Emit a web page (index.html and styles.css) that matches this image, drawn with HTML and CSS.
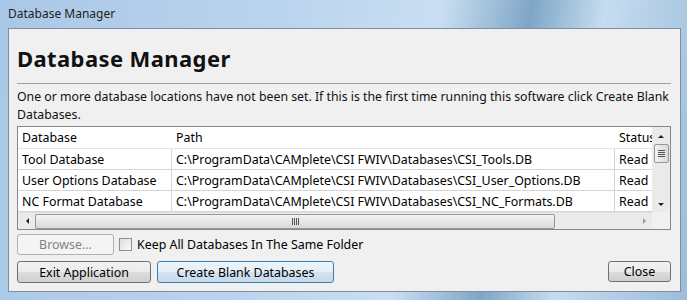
FILE: index.html
```html
<!DOCTYPE html>
<html lang="en">
<head>
    <meta charset="UTF-8">
    <title>Database Manager</title>
    <link rel="stylesheet" href="styles.css">
</head>
<body>
    <div class="window">
        <div class="title-bar">Database Manager</div>
        <div class="client">
            <h1 class="heading">Database Manager</h1>
            <p class="notice">One or more database locations have not been set. If this is the first time running this software click Create Blank Databases.</p>

            <div class="grid-box">
                <div class="grid-main">
                    <div class="grid-rows">
                        <div class="row header-row">
                            <div class="cell">Database</div>
                            <div class="cell">Path</div>
                            <div class="cell">Status</div>
                        </div>
                        <div class="row">
                            <div class="cell">Tool Database</div>
                            <div class="cell">C:\ProgramData\CAMplete\CSI FWIV\Databases\CSI_Tools.DB</div>
                            <div class="cell">Read</div>
                        </div>
                        <div class="row">
                            <div class="cell">User Options Database</div>
                            <div class="cell">C:\ProgramData\CAMplete\CSI FWIV\Databases\CSI_User_Options.DB</div>
                            <div class="cell">Read</div>
                        </div>
                        <div class="row">
                            <div class="cell">NC Format Database</div>
                            <div class="cell">C:\ProgramData\CAMplete\CSI FWIV\Databases\CSI_NC_Formats.DB</div>
                            <div class="cell">Read</div>
                        </div>
                    </div>
                    <div class="hscroll">
                        <div class="arrow arrow-left"></div>
                        <div class="hthumb"><span class="grip-v"></span></div>
                        <div class="arrow arrow-right"></div>
                    </div>
                </div>
                <div class="vscroll">
                    <div class="arrow arrow-up"></div>
                    <div class="vthumb"><span class="grip-h"></span></div>
                    <div class="vtrack"></div>
                    <div class="arrow arrow-down"></div>
                    <div class="corner"></div>
                </div>
            </div>

            <div class="option-row">
                <button class="btn btn-browse" disabled>Browse...</button>
                <label class="check"><span class="check-box"></span>Keep All Databases In The Same Folder</label>
            </div>

            <div class="button-row">
                <button class="btn btn-exit">Exit Application</button>
                <button class="btn btn-create">Create Blank Databases</button>
                <button class="btn btn-close">Close</button>
            </div>
        </div>
    </div>
</body>
</html>
```

FILE: styles.css
```css
* {
    margin: 0;
    padding: 0;
    box-sizing: border-box;
}

body {
    font-family: "Noto Sans", "Open Sans", sans-serif;
    font-size: 12.4px;
    color: #000;
    width: 687px;
    height: 300px;
    overflow: hidden;
    background: linear-gradient(100deg, #a9c7e6 0%, #bcd5ee 40%, #c9def2 60%, #7fa6c6 72%, #c6dcf0 82%, #9cbcdb 100%);
}

.window {
    height: 300px;
    display: flex;
    flex-direction: column;
}

.title-bar {
    height: 28px;
    padding: 5px 0 0 8px;
    font-size: 12px;
    color: #1e1e1e;
}

.client {
    margin: 0 6px 8px 8px;
    height: 264px;
    background: #f0f0f0;
    border: 1px solid #7c8ea3;
    padding: 0 9px 0 8px;
    display: flex;
    flex-direction: column;
}

.heading {
    font-size: 22px;
    font-weight: bold;
    letter-spacing: 0.4px;
    line-height: 30px;
    padding-top: 14px;
    padding-bottom: 10px;
    border-bottom: 1px solid #a0a0a0;
    color: #111;
}

.notice {
    font-size: 12.3px;
    line-height: 18px;
    padding-top: 4px;
    margin-right: -8px;
    color: #111;
}

.grid-box {
    margin-top: 2px;
    height: 104px;
    flex: none;
    border: 1px solid #828790;
    background: #fff;
    display: flex;
}

.grid-main {
    flex: 1;
    display: flex;
    flex-direction: column;
    min-width: 0;
}

.grid-rows {
    flex: 1;
    overflow: hidden;
}

.row {
    display: grid;
    grid-template-columns: 154px 443px 40px;
    height: 21px;
    border-bottom: 1px solid #d5d5d5;
}

.header-row {
    height: 22px;
    border-bottom: 1px solid #e5e5e5;
}

.cell {
    padding: 2px 0 0 4px;
    white-space: nowrap;
    overflow: hidden;
    border-right: 1px solid #d5d5d5;
}

.header-row .cell {
    border-right: none;
}

.hscroll {
    height: 17px;
    flex: none;
    background: #eaeaea;
    border-top: 1px solid #e0e0e0;
    display: flex;
    align-items: center;
}

.hthumb {
    width: 520px;
    height: 15px;
    border: 1px solid #989898;
    border-radius: 2px;
    background: linear-gradient(#f3f3f3, #d9d9d9);
    display: flex;
    justify-content: center;
    align-items: center;
}

.grip-v {
    width: 7px;
    height: 7px;
    background: repeating-linear-gradient(90deg, #555 0 1px, transparent 1px 2px);
}

.vscroll {
    width: 18px;
    background: #eaeaea;
    display: flex;
    flex-direction: column;
    align-items: center;
}

.vthumb {
    width: 15px;
    height: 19px;
    border: 1px solid #989898;
    border-radius: 2px;
    background: linear-gradient(90deg, #f3f3f3, #d9d9d9);
    display: flex;
    justify-content: center;
    align-items: center;
}

.grip-h {
    width: 7px;
    height: 7px;
    background: repeating-linear-gradient(#555 0 1px, transparent 1px 2px);
}

.vtrack {
    flex: 1;
}

.corner {
    width: 18px;
    height: 17px;
    background: #f0f0f0;
}

.arrow {
    width: 17px;
    height: 17px;
    position: relative;
    flex: none;
}

.arrow::after {
    content: "";
    position: absolute;
    left: 50%;
    top: 50%;
    border: 3px solid transparent;
}

.arrow-left::after {
    border-right: 3px solid #222;
    margin: -3px 0 0 -4px;
}

.arrow-right {
    margin-left: auto;
}

.arrow-right::after {
    border-left: 3px solid #999;
    margin: -3px 0 0 -1px;
}

.arrow-up::after {
    border-bottom: 3px solid #222;
    margin: -4px 0 0 -3px;
}

.arrow-down::after {
    border-top: 3px solid #222;
    margin: -1px 0 0 -3px;
}

.option-row {
    margin-top: 4px;
    display: flex;
    align-items: center;
    gap: 5px;
}

.check {
    display: flex;
    align-items: center;
    gap: 5px;
}

.check-box {
    width: 13px;
    height: 13px;
    border: 1px solid #8e8f8f;
    background: linear-gradient(135deg, #dcdcdc, #fbfbfb);
}

.button-row {
    margin-top: 6px;
    display: flex;
    gap: 6px;
}

.btn {
    font-family: inherit;
    font-size: 12.4px;
    height: 22px;
    border: 1px solid #707070;
    border-radius: 3px;
    background: linear-gradient(#f2f2f2 0%, #ebebeb 50%, #dddddd 51%, #cfcfcf 100%);
    color: #000;
}

.btn-browse {
    width: 97px;
    height: 21px;
    border-color: #adb2b5;
    background: #f4f4f4;
    color: #838383;
}

.btn-exit {
    width: 134px;
}

.btn-create {
    width: 177px;
    border-color: #3c7fb1;
    background: linear-gradient(#eef5fa 0%, #e3eef7 50%, #d3e3f1 51%, #c4d9ec 100%);
}

.btn-close {
    width: 63px;
    margin-left: auto;
    height: 21px;
}
```
